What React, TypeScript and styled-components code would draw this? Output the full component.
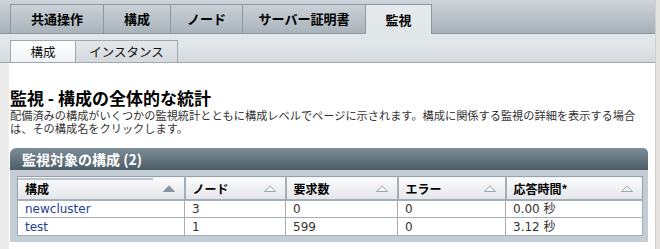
import styled, { createGlobalStyle } from "styled-components";

const GlobalStyle = createGlobalStyle`
  html, body {
    margin: 0;
    padding: 0;
    background: #ffffff;
  }
  body {
    font-family: "DejaVu Sans", "Noto Sans CJK JP", sans-serif;
    color: #222;
  }
`;

const mainTabs = [
  { label: "共通操作", width: 94 },
  { label: "構成", width: 68 },
  { label: "ノード", width: 73 },
  { label: "サーバー証明書", width: 124 },
  { label: "監視", width: 67, active: true },
];

const subTabs = [
  { label: "構成", width: 66, active: true },
  { label: "インスタンス", width: 103 },
];

interface Column {
  label: string;
  width: number;
  sorted?: boolean;
}

const columns: Column[] = [
  { label: "構成", width: 167, sorted: true },
  { label: "ノード", width: 101 },
  { label: "要求数", width: 112 },
  { label: "エラー", width: 108 },
  { label: "応答時間*", width: 137 },
];

const rows = [
  { name: "newcluster", nodes: "3", requests: "0", errors: "0", time: "0.00 秒" },
  { name: "test", nodes: "1", requests: "599", errors: "0", time: "3.12 秒" },
];

const SortIcon = ({ filled }: { filled?: boolean }) => (
  <svg width="12" height="7" viewBox="0 0 12 7">
    <polygon
      points="0.5,6.5 6,0.8 11.5,6.5"
      fill={filled ? "#8895a0" : "#f4f6f7"}
      stroke={filled ? "#8895a0" : "#9aa6b0"}
      strokeWidth="1"
    />
  </svg>
);

const App = () => {
  return (
    <>
      <GlobalStyle />
      <Frame>
        <Page>
          <TabBar>
            {mainTabs.map((t) => (
              <Tab key={t.label} $width={t.width} $active={t.active}>
                {t.label}
              </Tab>
            ))}
          </TabBar>
          <SubBar>
            {subTabs.map((t) => (
              <SubTab key={t.label} $width={t.width} $active={t.active}>
                {t.label}
              </SubTab>
            ))}
          </SubBar>
          <Content>
            <Title>監視 - 構成の全体的な統計</Title>
            <Description>
              <DescLine>
                配備済みの構成がいくつかの監視統計とともに構成レベルでページに示されます。構成に関係する監視の詳細を表示する場合
              </DescLine>
              <DescLine>は、その構成名をクリックします。</DescLine>
            </Description>
            <Panel>
              <PanelHeader>監視対象の構成 (2)</PanelHeader>
              <PanelBody>
                <Table>
                  <colgroup>
                    {columns.map((c) => (
                      <col key={c.label} style={{ width: c.width }} />
                    ))}
                  </colgroup>
                  <thead>
                    <tr>
                      {columns.map((c) => (
                        <HeadCell key={c.label} $sorted={c.sorted}>
                          <HeadInner>
                            <span>{c.label}</span>
                            <SortIcon filled={c.sorted} />
                          </HeadInner>
                        </HeadCell>
                      ))}
                    </tr>
                  </thead>
                  <tbody>
                    {rows.map((r) => (
                      <tr key={r.name}>
                        <Cell>
                          <NameLink href="#">{r.name}</NameLink>
                        </Cell>
                        <Cell>{r.nodes}</Cell>
                        <Cell>{r.requests}</Cell>
                        <Cell>{r.errors}</Cell>
                        <Cell>{r.time}</Cell>
                      </tr>
                    ))}
                  </tbody>
                </Table>
              </PanelBody>
            </Panel>
          </Content>
        </Page>
        <EdgeStrip />
      </Frame>
    </>
  );
};

const Frame = styled.div`
  display: flex;
  width: 660px;
  height: 249px;
  overflow: hidden;
`;

const Page = styled.div`
  width: 655px;
  display: flex;
  flex-direction: column;
`;

const EdgeStrip = styled.div`
  flex: 1;
  background: #e6e4e1;
  border-left: 1px solid #d2d0cc;
`;

const TabBar = styled.div`
  display: flex;
  align-items: flex-end;
  box-sizing: border-box;
  height: 34px;
  padding: 4px 0 0 10px;
  background: linear-gradient(#cfd5da, #a6b0b9);
  border-bottom: 1px solid #8d99a3;
`;

const Tab = styled.div<{ $width: number; $active?: boolean }>`
  box-sizing: border-box;
  width: ${(p) => p.$width}px;
  height: ${(p) => (p.$active ? 30 : 29)}px;
  margin-right: -1px;
  margin-bottom: ${(p) => (p.$active ? -1 : 0)}px;
  display: flex;
  align-items: center;
  justify-content: center;
  padding-bottom: 1px;
  border: 1px solid #8d99a3;
  border-bottom: none;
  background: ${(p) =>
    p.$active ? "linear-gradient(#e6eaed, #e1e6e9)" : "linear-gradient(#cbd2d7, #a9b3bb)"};
  position: relative;
  z-index: ${(p) => (p.$active ? 1 : 0)};
  font-family: "Noto Sans CJK JP", sans-serif;
  font-size: 13px;
  font-weight: 700;
  color: #000;
`;

const SubBar = styled.div`
  display: flex;
  align-items: flex-end;
  box-sizing: border-box;
  height: 29px;
  padding: 5px 0 0 10px;
  background: linear-gradient(#e3e8eb 0%, #e0e5e8 45%, #d2d9de 100%);
  border-bottom: 1px solid #9ea9b2;
`;

const SubTab = styled.div<{ $width: number; $active?: boolean }>`
  box-sizing: border-box;
  width: ${(p) => p.$width}px;
  height: 23px;
  margin-right: -1px;
  margin-bottom: -1px;
  display: flex;
  align-items: center;
  justify-content: center;
  border: 1px solid #9ea9b2;
  background: ${(p) =>
    p.$active ? "linear-gradient(#ffffff, #eef1f3)" : "linear-gradient(#e3e7ea, #d3d9dd)"};
  font-family: "Noto Sans CJK JP", sans-serif;
  font-size: 12.5px;
  color: #111;
`;

const Content = styled.div`
  flex: 1;
  display: flex;
  flex-direction: column;
  padding: 25px 7px 0 10px;
  box-shadow: inset 9px 0 0 #ebebeb;
`;

const Title = styled.h1`
  margin: 0;
  font-family: "Noto Sans CJK JP", sans-serif;
  font-size: 17px;
  line-height: 20px;
  font-weight: 700;
  color: #000;
`;

const Description = styled.div`
  margin-top: 2px;
  display: flex;
  flex-direction: column;
  font-family: "Liberation Sans", "Noto Sans CJK JP", sans-serif;
  font-size: 11.2px;
  color: #333;
`;

const DescLine = styled.div`
  height: 13px;
  line-height: 13px;
  white-space: nowrap;
`;

const Panel = styled.div`
  margin-top: 12px;
  width: 638px;
`;

const PanelHeader = styled.div`
  height: 22px;
  box-sizing: border-box;
  padding: 1px 0 0 12px;
  border-radius: 6px 5px 0 0;
  background: linear-gradient(#7e8e99, #4c5d68);
  font-family: "Noto Sans CJK JP", sans-serif;
  font-size: 14px;
  line-height: 20px;
  font-weight: 700;
  color: #fff;
`;

const PanelBody = styled.div`
  background: #c4cdd3;
  padding: 6px 6px 6px 7px;
`;

const Table = styled.table`
  width: 625px;
  border-collapse: collapse;
  table-layout: fixed;
  background: #fff;
  border: 1px solid #95a1ab;
`;

const HeadCell = styled.th<{ $sorted?: boolean }>`
  height: 23px;
  padding: 0 9px 0 7px;
  box-sizing: border-box;
  text-align: left;
  background: linear-gradient(#fbfbfc, #e3e6e9);
  border-left: 2px solid #a4aeb7;
  border-bottom: 2px solid #a4aeb7;
  position: relative;
  font-family: "Noto Sans CJK JP", sans-serif;
  font-size: 12px;
  font-weight: 700;
  color: #000;

  &:first-child {
    border-left: none;
  }

  &::before {
    content: "";
    display: ${(p) => (p.$sorted ? "block" : "none")};
    position: absolute;
    left: 0;
    top: 1px;
    width: 135px;
    height: 2px;
    background: #bcc3ca;
  }
`;

const HeadInner = styled.div`
  display: flex;
  align-items: center;
  justify-content: space-between;
  padding-top: 2px;
`;

const Cell = styled.td`
  height: 18px;
  padding: 0 7px;
  box-sizing: border-box;
  border: 1px solid #a4aeb7;
  font-family: "DejaVu Sans", "Noto Sans CJK JP", sans-serif;
  font-size: 12px;
  line-height: 16px;
  color: #333;
  white-space: nowrap;
`;

const NameLink = styled.a`
  color: #1f3f94;
  text-decoration: none;
`;

export default App;
